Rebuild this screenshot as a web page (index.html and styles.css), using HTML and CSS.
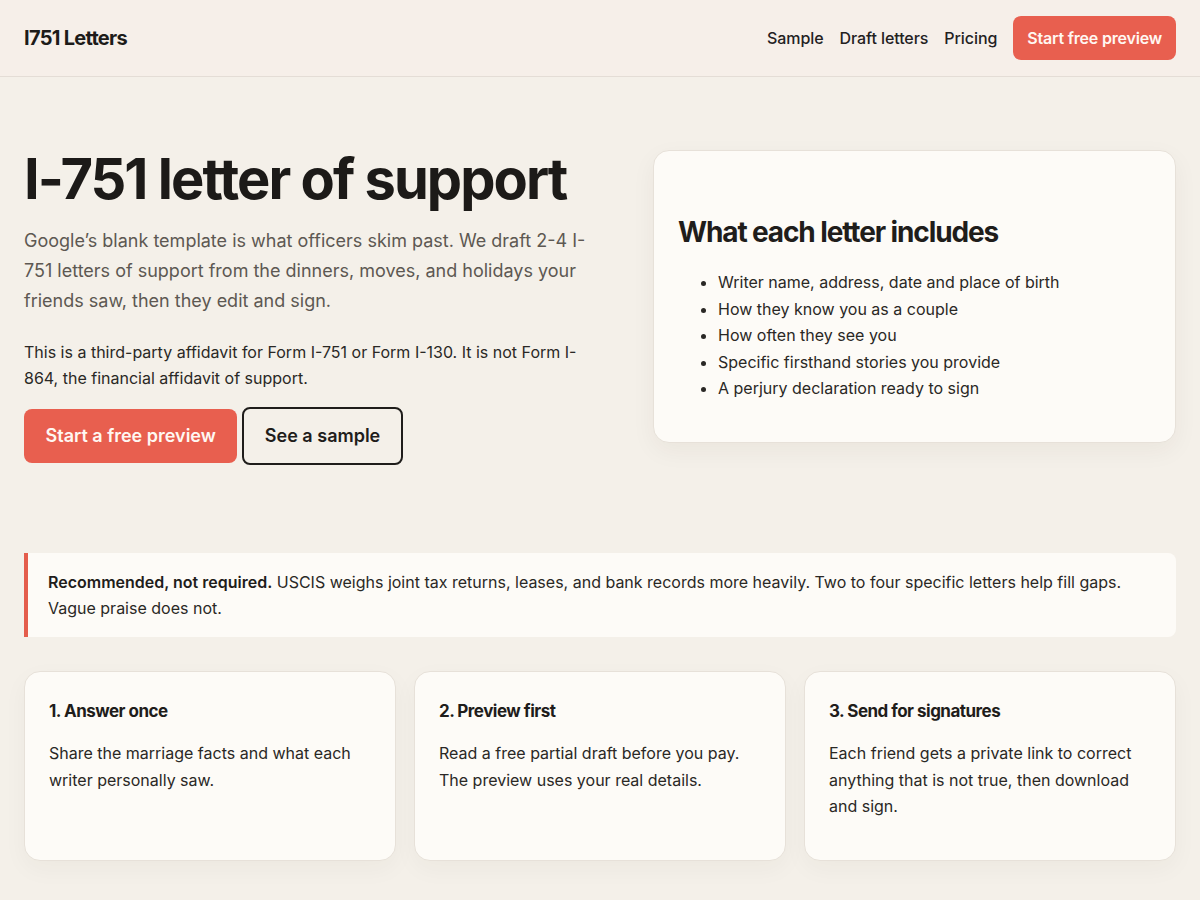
FILE: index.html
```html
<!DOCTYPE html>
<html lang="en">
<head>
<meta charset="utf-8">
<title>I-751 letter of support</title>
<link rel="stylesheet" href="styles.css">
</head>
<body>
<header class="site-header">
  <a class="logo" href="#">I751 Letters</a>
  <nav class="nav">
    <a href="#" class="nav-link">Sample</a>
    <a href="#" class="nav-link">Draft letters</a>
    <a href="#" class="nav-link">Pricing</a>
    <a href="#" class="btn btn-primary btn-small">Start free preview</a>
  </nav>
</header>
<main class="main">
  <section class="hero">
    <div class="hero-copy">
      <h1 class="hero-title">I-751 letter of support</h1>
      <p class="lead">Google’s blank template is what officers skim past. We draft 2-4 I-751 letters of support from the dinners, moves, and holidays your friends saw, then they edit and sign.</p>
      <p class="note">This is a third-party affidavit for Form I-751 or Form I-130. It is not Form I-864, the financial affidavit of support.</p>
      <div class="actions">
        <a href="#" class="btn btn-primary btn-large btn-wide">Start a free preview</a>
        <a href="#" class="btn btn-outline btn-large">See a sample</a>
      </div>
    </div>
    <aside class="includes-card">
      <h2 class="card-title">What each letter includes</h2>
      <ul class="includes-list">
        <li>Writer name, address, date and place of birth</li>
        <li>How they know you as a couple</li>
        <li>How often they see you</li>
        <li>Specific firsthand stories you provide</li>
        <li>A perjury declaration ready to sign</li>
      </ul>
    </aside>
  </section>
  <div class="callout">
    <p><strong>Recommended, not required.</strong> USCIS weighs joint tax returns, leases, and bank records more heavily. Two to four specific letters help fill gaps. Vague praise does not.</p>
  </div>
  <section class="steps">
    <article class="step">
      <h3 class="step-title">1. Answer once</h3>
      <p>Share the marriage facts and what each writer personally saw.</p>
    </article>
    <article class="step">
      <h3 class="step-title">2. Preview first</h3>
      <p>Read a free partial draft before you pay. The preview uses your real details.</p>
    </article>
    <article class="step">
      <h3 class="step-title">3. Send for signatures</h3>
      <p>Each friend gets a private link to correct anything that is not true, then download and sign.</p>
    </article>
  </section>
</main>
</body>
</html>
```
FILE: styles.css
```css
* { box-sizing: border-box; }
html, body { margin: 0; padding: 0; }
body {
  background: #f4f0e9;
  color: #1f1d1b;
  font-family: Inter, "Noto Sans", sans-serif;
  font-size: 16px;
  line-height: 1.65;
}
a { color: inherit; text-decoration: none; }

.site-header {
  height: 77px;
  background: #f6efe9;
  border-bottom: 1px solid #e4ddd6;
  display: flex;
  align-items: center;
  justify-content: space-between;
  padding: 0 24px;
}
.logo {
  font-size: 20px;
  font-weight: 700;
  letter-spacing: -0.035em;
  color: #1d1b19;
}
.nav {
  display: flex;
  align-items: center;
  gap: 16px;
}
.nav-link {
  font-size: 16px;
  font-weight: 500;
  letter-spacing: -0.005em;
  color: #23211f;
}

.btn {
  display: inline-block;
  border-radius: 8px;
  font-weight: 600;
}
.btn-primary {
  background: #e85f4f;
  color: #fff7f2;
}
.btn-small {
  padding: 10px 14px;
  font-size: 16px;
  line-height: 24px;
  letter-spacing: -0.012em;
}
.btn-large {
  padding: 14px 20.5px;
  font-size: 18px;
  line-height: 26px;
}
.btn-wide {
  padding-left: 21.5px;
  padding-right: 21.5px;
}
.btn-outline {
  border: 2px solid #1f1d1b;
  color: #1f1d1b;
  background: transparent;
}

.main {
  padding: 0 24px 40px;
}

.hero {
  display: grid;
  grid-template-columns: 1fr 523px;
  gap: 52px;
  align-items: start;
  padding-top: 70px;
}
.hero-title {
  margin: 0;
  font-size: 56px;
  line-height: 64px;
  font-weight: 700;
  letter-spacing: -0.035em;
  color: #1c1a18;
}
.lead {
  margin: 15px 0 0;
  font-size: 18px;
  line-height: 30px;
  color: #5d5852;
}
.note {
  margin: 23px 0 0;
  font-size: 16px;
  line-height: 26px;
  color: #2a2825;
}
.actions {
  display: flex;
  align-items: center;
  gap: 5px;
  margin-top: 16px;
}

.includes-card {
  margin-top: 3px;
  background: #fdfbf7;
  border: 1px solid #e7e1d9;
  border-radius: 16px;
  box-shadow: 0 8px 24px rgba(60, 40, 20, 0.05);
  padding: 24px 24px 24px;
}
.card-title {
  margin: 40px 0 20px;
  font-size: 28px;
  line-height: 34px;
  font-weight: 700;
  letter-spacing: -0.04em;
}
.includes-list {
  margin: 0 0 16px;
  padding-left: 40px;
  font-size: 16px;
  line-height: 26.5px;
  color: #2a2825;
}

.callout {
  margin-top: 88px;
  background: #fdfbf7;
  border-left: 4px solid #e45d4c;
  border-radius: 0 8px 8px 0;
  padding: 16px 20px;
}
.callout p {
  margin: 0;
  font-size: 16px;
  line-height: 26px;
  color: #2a2825;
}
.callout strong { font-weight: 600; color: #1f1d1b; }

.steps {
  margin-top: 34px;
  display: grid;
  grid-template-columns: repeat(3, 1fr);
  gap: 18px;
}
.step {
  background: #fdfbf7;
  border: 1px solid #e7e1d9;
  border-radius: 16px;
  box-shadow: 0 8px 24px rgba(60, 40, 20, 0.04);
  padding: 25px 24px 40px;
  min-height: 189px;
}
.step-title {
  margin: 0;
  font-size: 17px;
  line-height: 28px;
  font-weight: 700;
  letter-spacing: -0.03em;
}
.step p {
  margin: 15px 0 0;
  font-size: 16px;
  line-height: 26.5px;
  color: #2a2825;
}
```
